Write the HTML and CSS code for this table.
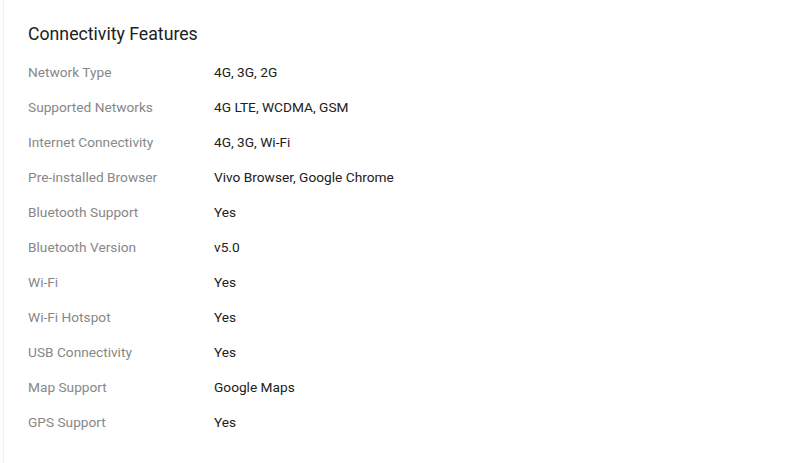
FILE: index.html
```html
<!DOCTYPE html>
<html>
<head>
<meta charset="utf-8">
<link rel="stylesheet" href="styles.css">
</head>
<body>
<div class="card">
  <h2 class="title">Connectivity Features</h2>
  <table class="specs">
    <tr><td class="label">Network Type</td><td class="value">4G, 3G, 2G</td></tr>
    <tr><td class="label">Supported Networks</td><td class="value">4G LTE, WCDMA, GSM</td></tr>
    <tr><td class="label">Internet Connectivity</td><td class="value">4G, 3G, Wi-Fi</td></tr>
    <tr><td class="label">Pre-installed Browser</td><td class="value">Vivo Browser, Google Chrome</td></tr>
    <tr><td class="label">Bluetooth Support</td><td class="value">Yes</td></tr>
    <tr><td class="label">Bluetooth Version</td><td class="value">v5.0</td></tr>
    <tr><td class="label">Wi-Fi</td><td class="value">Yes</td></tr>
    <tr><td class="label">Wi-Fi Hotspot</td><td class="value">Yes</td></tr>
    <tr><td class="label">USB Connectivity</td><td class="value">Yes</td></tr>
    <tr><td class="label">Map Support</td><td class="value">Google Maps</td></tr>
    <tr><td class="label">GPS Support</td><td class="value">Yes</td></tr>
  </table>
</div>
</body>
</html>
```
FILE: styles.css
```css
html, body {
  margin: 0;
  padding: 0;
  background: #fff;
}
body {
  font-family: Roboto, "Liberation Sans", sans-serif;
  padding-left: 3px;
}
.card {
  border-left: 1px solid #f0f0f0;
  min-height: 463px;
  box-sizing: border-box;
  padding: 23px 24px 0 24px;
}
.title {
  margin: 0 0 9px 0;
  font-size: 17.7px;
  font-weight: 400;
  color: #212121;
  line-height: 22px;
}
.specs {
  border-collapse: collapse;
}
.specs td {
  padding: 0;
  height: 35px;
  font-size: 13.7px;
  line-height: 20px;
  vertical-align: middle;
}
.label {
  width: 186px;
  color: #878787;
}
.value {
  color: #212121;
}
```
